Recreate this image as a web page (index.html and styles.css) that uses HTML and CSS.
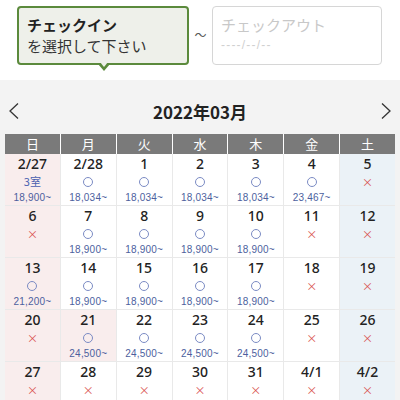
FILE: index.html
```html
<!DOCTYPE html>
<html lang="ja">
<head>
<meta charset="utf-8">
<link rel="stylesheet" href="styles.css">
</head>
<body>
<div class="top">
  <div class="box checkin">
    <div class="label">チェックイン</div>
    <div class="sub">を選択して下さい</div>
    <span class="tail"></span>
  </div>
  <div class="tilde">〜</div>
  <div class="box checkout">
    <div class="label">チェックアウト</div>
    <div class="date">----/--/--</div>
  </div>
</div>
<div class="cal">
  <div class="month">
    <svg class="chev" width="12" height="18" viewBox="0 0 12 18"><polyline points="10,1.5 2,9 10,16.5" fill="none" stroke="#333" stroke-width="1.3"/></svg>
    <div class="title">2022年03月</div>
    <svg class="chev" width="12" height="18" viewBox="0 0 12 18"><polyline points="2,1.5 10,9 2,16.5" fill="none" stroke="#333" stroke-width="1.3"/></svg>
  </div>
  <div class="head">
    <div>日</div><div>月</div><div>火</div><div>水</div><div>木</div><div>金</div><div>土</div>
  </div>
  <div class="grid">
    <div class="c sun"><b>2/27</b><span class="m"><span class="rooms">3室</span></span><i>18,900~</i></div>
    <div class="c"><b>2/28</b><span class="m"><span class="o"></span></span><i>18,034~</i></div>
    <div class="c"><b>1</b><span class="m"><span class="o"></span></span><i>18,034~</i></div>
    <div class="c"><b>2</b><span class="m"><span class="o"></span></span><i>18,034~</i></div>
    <div class="c"><b>3</b><span class="m"><span class="o"></span></span><i>18,034~</i></div>
    <div class="c"><b>4</b><span class="m"><span class="o"></span></span><i>23,467~</i></div>
    <div class="c sat"><b>5</b><span class="m x">×</span></div>

    <div class="c sun"><b>6</b><span class="m x">×</span></div>
    <div class="c"><b>7</b><span class="m"><span class="o"></span></span><i>18,900~</i></div>
    <div class="c"><b>8</b><span class="m"><span class="o"></span></span><i>18,900~</i></div>
    <div class="c"><b>9</b><span class="m"><span class="o"></span></span><i>18,900~</i></div>
    <div class="c"><b>10</b><span class="m"><span class="o"></span></span><i>18,900~</i></div>
    <div class="c"><b>11</b><span class="m x">×</span></div>
    <div class="c sat"><b>12</b><span class="m x">×</span></div>

    <div class="c sun"><b>13</b><span class="m"><span class="o"></span></span><i>21,200~</i></div>
    <div class="c"><b>14</b><span class="m"><span class="o"></span></span><i>18,900~</i></div>
    <div class="c"><b>15</b><span class="m"><span class="o"></span></span><i>18,900~</i></div>
    <div class="c"><b>16</b><span class="m"><span class="o"></span></span><i>18,900~</i></div>
    <div class="c"><b>17</b><span class="m"><span class="o"></span></span><i>18,900~</i></div>
    <div class="c"><b>18</b><span class="m x">×</span></div>
    <div class="c sat"><b>19</b><span class="m x">×</span></div>

    <div class="c sun"><b>20</b><span class="m x">×</span></div>
    <div class="c sun"><b>21</b><span class="m"><span class="o"></span></span><i>24,500~</i></div>
    <div class="c"><b>22</b><span class="m"><span class="o"></span></span><i>24,500~</i></div>
    <div class="c"><b>23</b><span class="m"><span class="o"></span></span><i>24,500~</i></div>
    <div class="c"><b>24</b><span class="m"><span class="o"></span></span><i>24,500~</i></div>
    <div class="c"><b>25</b><span class="m x">×</span></div>
    <div class="c sat"><b>26</b><span class="m x">×</span></div>

    <div class="c sun"><b>27</b><span class="m x">×</span></div>
    <div class="c"><b>28</b><span class="m x">×</span></div>
    <div class="c"><b>29</b><span class="m x">×</span></div>
    <div class="c"><b>30</b><span class="m x">×</span></div>
    <div class="c"><b>31</b><span class="m x">×</span></div>
    <div class="c"><b>4/1</b><span class="m x">×</span></div>
    <div class="c sat"><b>4/2</b><span class="m x">×</span></div>
  </div>
</div>
</body>
</html>
```
FILE: styles.css
```css
* { box-sizing: border-box; }
html, body { margin: 0; padding: 0; }
body {
  width: 400px;
  height: 400px;
  overflow: hidden;
  background: #f3f3f3;
  font-family: "Noto Sans CJK JP", "Liberation Sans", sans-serif;
  color: #222;
}
.top {
  height: 80px;
  background: #fff;
  display: flex;
  align-items: flex-start;
  padding: 6px 0 0 17px;
}
.box {
  height: 59px;
  border-radius: 4px;
  padding: 6px 0 0 8px;
  line-height: 21px;
  font-size: 15px;
}
.checkin {
  position: relative;
  width: 172px;
  border: 2px solid #5b8a3c;
  background: #eef0ea;
}
.checkin .label { font-weight: bold; color: #222; }
.checkin .sub { color: #333; }
.tail {
  position: absolute;
  left: 79px;
  bottom: -8px;
  width: 0; height: 0;
  border-left: 6px solid transparent;
  border-right: 6px solid transparent;
  border-top: 7px solid #5b8a3c;
}
.tail::after {
  content: "";
  position: absolute;
  left: -4px;
  top: -9px;
  border-left: 4px solid transparent;
  border-right: 4px solid transparent;
  border-top: 5px solid #eef0ea;
}
.tilde {
  width: 23px;
  text-align: center;
  font-size: 12px;
  color: #555;
  padding-top: 20px;
}
.checkout {
  width: 170px;
  border: 1px solid #d6d6d6;
  background: #fff;
  padding: 7px 0 0 8px;
}
.checkout .label { color: #c8c8c8; }
.checkout .date {
  color: #d0d0d0;
  font-size: 12px;
  line-height: 20px;
  letter-spacing: 1.2px;
  font-family: "Liberation Sans", sans-serif;
}

.cal { padding: 0 5px; }
.month {
  height: 54px;
  padding: 8px 3px 0 3px;
  display: flex;
  align-items: center;
  justify-content: space-between;
}
.title { font-size: 17px; font-weight: bold; color: #222; }
.chev { display: block; }
.head {
  display: grid;
  grid-template-columns: repeat(7, 1fr);
  column-gap: 1px;
  background: #fff;
}
.head div {
  background: #7a7a7a;
  color: #fff;
  height: 20px;
  line-height: 20px;
  text-align: center;
  font-size: 13px;
}
.grid {
  display: grid;
  grid-template-columns: repeat(7, 1fr);
  grid-auto-rows: 51px;
  gap: 1px;
  background: #e9e9e9;
  border-bottom: 1px solid #e9e9e9;
}
.c {
  background: #fff;
  display: flex;
  flex-direction: column;
  align-items: center;
  overflow: hidden;
}
.c.sun { background: #f9eded; }
.c.sat { background: #ebf2f7; }
.c b {
  display: block;
  font-family: "Noto Sans", "Liberation Sans", sans-serif;
  font-weight: 500;
  font-size: 14px;
  line-height: 19px;
  height: 19px;
  color: #222;
}
.c .m {
  display: flex;
  align-items: center;
  justify-content: center;
  height: 14px;
  margin-top: 2px;
  width: 100%;
}
.c .o {
  width: 10px; height: 10px;
  border: 1px solid #7b8bc4;
  border-radius: 50%;
}
.c .rooms {
  font-size: 11px;
  line-height: 14px;
  color: #4a5fb0;
  margin-top: -1px;
}
.c .x {
  font-size: 11px;
  line-height: 14px;
  color: #d9534f;
}
.c i {
  display: block;
  font-style: normal;
  font-size: 10px;
  line-height: 14px;
  padding-top: 3px;
  color: #4d5f9e;
  letter-spacing: 0.2px;
  font-family: "Liberation Sans", sans-serif;
}
```
